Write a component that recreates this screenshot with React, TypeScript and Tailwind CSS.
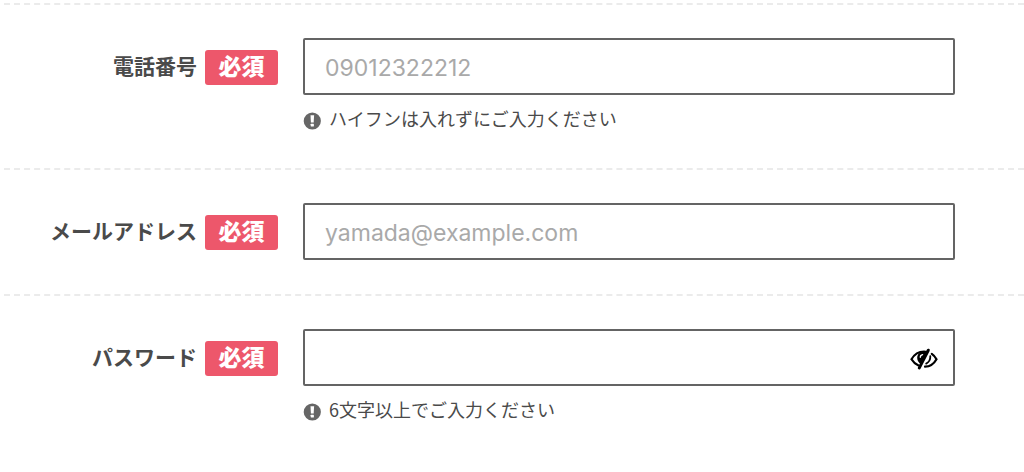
import { useState } from 'react';

interface Field {
  id: string;
  label: string;
  type: 'tel' | 'email' | 'password';
  placeholder?: string;
  hint?: string;
}

const FIELDS: Field[] = [
  {
    id: 'tel',
    label: '電話番号',
    type: 'tel',
    placeholder: '09012322212',
    hint: 'ハイフンは入れずにご入力ください',
  },
  { id: 'email', label: 'メールアドレス', type: 'email', placeholder: 'yamada@example.com' },
  { id: 'password', label: 'パスワード', type: 'password', hint: '6文字以上でご入力ください' },
];

function AlertIcon() {
  return (
    <svg viewBox="0 0 18 18" className="w-[18px] h-[18px] mt-[7px] shrink-0" aria-hidden="true">
      <circle cx="9.3" cy="9" r="8.6" fill="#666" />
      <path d="M7.500 3.300h3.600l-.4 7.300H7.900z" fill="#fff" />
      <rect x="7.700" y="11.800" width="3.200" height="2.700" rx="0.4" fill="#fff" />
    </svg>
  );
}

function EyeSlashIcon() {
  return (
    <svg viewBox="0 0 28 22" className="w-7 h-[22px]" fill="none" aria-hidden="true">
      <path
        d="M17 4.100C16 3.700 15 3.500 14 3.500 8.700 3.500 4.200 6.600 1.500 11.200c1.600 2.700 4 4.900 7 6.200"
        stroke="#000"
        strokeWidth="2.200"
        strokeLinecap="round"
      />
      <path
        d="M21.800 5.900c1.900 1.300 3.500 3.100 4.700 5.300-2.500 4.500-6.800 7.300-11.500 7.500"
        stroke="#000"
        strokeWidth="2.200"
        strokeLinecap="round"
      />
      <path d="M18.300 2.200 9.300 19.900" stroke="#000" strokeWidth="3" strokeLinecap="round" />
      <path d="M17.400 3.700C11.500 2.700 7.100 5.200 7.200 9.900c.1 2.700 1.500 4.800 3.600 6.100z" fill="#000" />
      <path d="M12.600 6.600c-1.500.3-2.300 1.300-2.300 2.700" stroke="#fff" strokeWidth="1.300" strokeLinecap="round" />
      <path d="M20.300 8.100c.2 3.600-1.500 6.100-4.100 7.500" stroke="#000" strokeWidth="1.800" strokeLinecap="round" />
    </svg>
  );
}

function FormRow({ field }: { field: Field }) {
  const [value, setValue] = useState('');
  const [visible, setVisible] = useState(false);
  const isPassword = field.type === 'password';

  return (
    <div className="flex items-start border-t-2 border-dashed border-[#ebebeb] pt-[33px] pb-[34px]">
      {/* Label */}
      <label
        htmlFor={field.id}
        className="w-[274px] h-[57px] pt-px shrink-0 flex items-center justify-end gap-2 text-[21px] font-bold text-[#4a4a4a]"
      >
        <span className="pb-0.5">{field.label}</span>
        <span className="w-[73px] h-[35px] flex justify-center rounded-[3px] bg-[#ed576b] text-white text-[23px] font-black leading-[31px]">
          必須
        </span>
      </label>

      {/* Input */}
      <div className="flex-1 min-w-0 ml-[25px] mr-[69px]">
        <div className="relative">
          <input
            id={field.id}
            type={isPassword && visible ? 'text' : field.type}
            value={value}
            onChange={(e) => setValue(e.target.value)}
            placeholder={field.placeholder}
            className="block w-full h-[57px] rounded-[2px] border-2 border-[#646464] bg-white px-5 pt-0.5 font-['Inter','Noto_Sans_CJK_JP',sans-serif] text-[23px] text-[#4a4a4a] outline-none placeholder:text-[#a9a9a9]"
          />
          {isPassword && (
            <button
              type="button"
              aria-label="パスワードを表示"
              onClick={() => setVisible(!visible)}
              className="absolute right-[17px] inset-y-0 pt-0.5 flex items-center"
            >
              <EyeSlashIcon />
            </button>
          )}
        </div>
        {field.hint && (
          <p className="flex gap-2 mt-2.5 h-[29px] text-[18px] leading-[27px] text-[#4a4a4a]">
            <AlertIcon />
            {field.hint}
          </p>
        )}
      </div>
    </div>
  );
}

export default function App() {
  return (
    <form
      className="bg-white pt-[3px] pl-1 font-['Noto_Sans_CJK_JP',sans-serif]"
      onSubmit={(e) => e.preventDefault()}
    >
      {FIELDS.map((field) => (
        <FormRow key={field.id} field={field} />
      ))}
    </form>
  );
}
